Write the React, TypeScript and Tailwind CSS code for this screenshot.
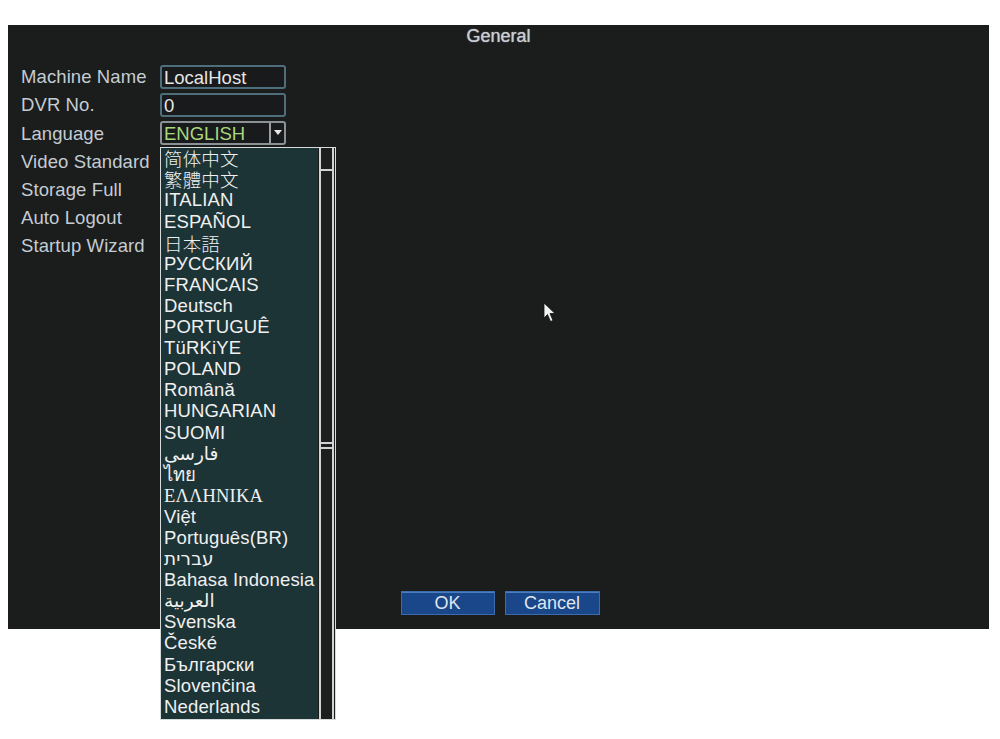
import React from 'react';

const fields = ['Machine Name', 'DVR No.', 'Language', 'Video Standard', 'Storage Full', 'Auto Logout', 'Startup Wizard'];

type Lang = { label: string; cls?: string };

const cjk = 'text-[16px] font-light text-[#d8dcdc]';

const languages: Lang[] = [
  { label: '简体中文', cls: `font-["Noto_Sans_CJK_SC",sans-serif] ${cjk}` },
  { label: '繁體中文', cls: `font-["Noto_Sans_CJK_TC",sans-serif] ${cjk}` },
  { label: 'ITALIAN' },
  { label: 'ESPAÑOL' },
  { label: '日本語', cls: `font-["Noto_Sans_CJK_JP",sans-serif] ${cjk}` },
  { label: 'РУССКИЙ' },
  { label: 'FRANCAIS' },
  { label: 'Deutsch' },
  { label: 'PORTUGUÊ' },
  { label: 'TüRKiYE' },
  { label: 'POLAND' },
  { label: 'Română' },
  { label: 'HUNGARIAN' },
  { label: 'SUOMI' },
  { label: 'فارسی', cls: 'text-[11px] font-["DejaVu_Sans",sans-serif]' },
  { label: 'ไทย', cls: 'text-[16px] font-["Liberation_Serif",serif]' },
  { label: 'ΕΛΛΗΝΙΚΑ', cls: 'text-[17px] font-["Liberation_Serif",serif]' },
  { label: 'Việt' },
  { label: 'Português(BR)' },
  { label: 'עברית', cls: 'font-["DejaVu_Sans",sans-serif] text-[17px]' },
  { label: 'Bahasa Indonesia' },
  { label: 'العربية', cls: 'text-[11px] font-["DejaVu_Sans",sans-serif]' },
  { label: 'Svenska' },
  { label: 'České' },
  { label: 'Български' },
  { label: 'Slovenčina' },
  { label: 'Nederlands' },
];

function Field({ index }: { index: number }) {
  if (index === 0 || index === 1) {
    return (
      <div className="h-[24px] w-[126px] rounded-[3px] border-2 border-[#4f6e7c] bg-[#181a1b] pl-[2px] text-[18.5px] leading-[21px] text-[#e6e6e6]">
        {index === 0 ? 'LocalHost' : '0'}
      </div>
    );
  }
  if (index === 2) {
    return (
      <div className="flex h-[24px] w-[126px] rounded-[3px] border-2 border-[#8a9296] bg-[#181a1b]">
        <div className="flex-1 pl-[2px] text-[18.5px] leading-[21px] text-[#a9d77e]">ENGLISH</div>
        <div className="flex w-[15px] items-center justify-center border-l-2 border-[#9aa0a2]">
          <svg width="8" height="6" viewBox="0 0 8 6">
            <path d="M0 0 H8 L4 5 Z" fill="#e8e8e8" />
          </svg>
        </div>
      </div>
    );
  }
  return null;
}

export default function App() {
  return (
    <div className="min-h-[739px] bg-white pt-[25px] pl-[8px] font-['Liberation_Sans',Arial,sans-serif]">
      <div className="relative flex h-[604px] w-[981px] flex-col bg-[#1b1c1c]">
        <div className="h-[22px] text-center text-[18px] leading-[22px] text-[#c8cdd4] [text-shadow:0_0_1px_#c8cdd4]">General</div>

        <div className="mt-[16px] flex flex-col pl-[13px]">
          {fields.map((f, i) => (
            <div key={f} className="flex h-[28.2px] items-center">
              <div className="w-[139px] text-[18.5px] tracking-[0.1px] text-[#c4ccd3]">{f}</div>
              <Field index={i} />
            </div>
          ))}
        </div>

        <div className="mt-auto flex justify-center gap-[10px] pb-[14px] pl-[3px]">
          <button className="h-[24px] w-[94px] border border-[#3c6cae] bg-[#1a468a] text-[18px] leading-[20px] text-[#dfe6ee] shadow-[inset_0_1px_0_#4a7cc0]">
            OK
          </button>
          <button className="h-[24px] w-[95px] border border-[#3c6cae] bg-[#1a468a] text-[18px] leading-[20px] text-[#dfe6ee] shadow-[inset_0_1px_0_#4a7cc0]">
            Cancel
          </button>
        </div>

        <div className="absolute left-[152px] top-[122px] flex h-[573px] w-[176px] border border-[#d6dada] bg-[#1b1c1c]">
          <div className="flex-1 bg-[#1d3437] pl-[3px]">
            {languages.map((l) => (
              <div
                key={l.label}
                className={`flex h-[21.1px] items-center whitespace-nowrap text-[18.5px] leading-none tracking-[0.15px] text-[#f0f0f0] ${l.cls ?? ''}`}
              >
                {l.label}
              </div>
            ))}
          </div>
          <div className="ml-[1px] flex w-[15px] flex-col border-x-2 border-[#d0d4d4] bg-[#1e1e1e]">
            <div className="h-[23px] border-b-2 border-[#d0d4d4]" />
            <div className="mt-[271px] h-[2px] bg-[#d0d4d4]" />
            <div className="mt-[3px] h-[2px] bg-[#d0d4d4]" />
          </div>
          <div className="w-[1px] bg-[#1b1c1c]" />
        </div>

        <svg className="absolute left-[535px] top-[277px]" width="14" height="22" viewBox="0 0 14 22">
          <path d="M1 1 L1 16 L4.5 12.5 L7.5 19.5 L10 18.5 L7 11.5 L12 11.5 Z" fill="#f2f2f2" stroke="#111" strokeWidth="0.8" />
        </svg>
      </div>
    </div>
  );
}
